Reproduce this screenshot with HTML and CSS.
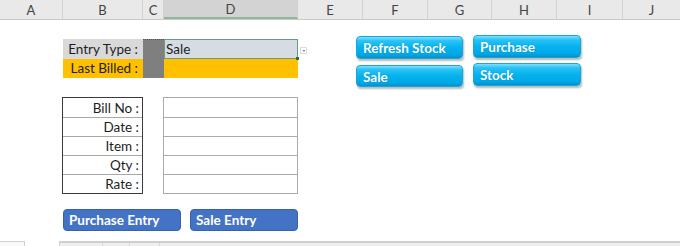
FILE: index.html
```html
<!DOCTYPE html>
<html>
<head>
<meta charset="utf-8">
<link rel="stylesheet" href="styles.css">
</head>
<body>
<div class="sheet">
  <div class="colhead">
    <div class="ch w-a">A</div>
    <div class="ch w-b">B</div>
    <div class="ch w-c">C</div>
    <div class="ch w-d sel">D</div>
    <div class="ch w-e">E</div>
    <div class="ch w-f">F</div>
    <div class="ch w-g">G</div>
    <div class="ch w-h">H</div>
    <div class="ch w-i">I</div>
    <div class="ch w-j">J</div>
  </div>
  <div class="grid">
    <div class="cell lbl gray r-entry">Entry Type :</div>
    <div class="cell dark"></div>
    <div class="cell val active r-entry">Sale<span class="handle"></span><span class="dd"><span class="arrow"></span></span></div>
    <div class="cell lbl yellow r-last">Last Billed :</div>
    <div class="cell yellowv r-last"></div>
    <div class="labels">
      <div class="trow">Bill No :</div>
      <div class="trow">Date :</div>
      <div class="trow">Item :</div>
      <div class="trow">Qty :</div>
      <div class="trow">Rate :</div>
    </div>
    <div class="inputs">
      <div class="irow"></div>
      <div class="irow"></div>
      <div class="irow"></div>
      <div class="irow"></div>
      <div class="irow"></div>
    </div>
  </div>
  <div class="footer">
    <div class="fbox"></div>
    <div class="tabs">
      <span class="tab t1"></span><span class="tab t2"></span><span class="tab t3"></span><span class="tab t4"></span>
    </div>
  </div>
  <button class="shine b-refresh">Refresh Stock</button>
  <button class="shine b-purchase">Purchase</button>
  <button class="shine b-sale">Sale</button>
  <button class="shine b-stock">Stock</button>
  <button class="flat b-pentry">Purchase Entry</button>
  <button class="flat b-sentry">Sale Entry</button>
</div>
</body>
</html>
```
FILE: styles.css
```css
html, body {
  margin: 0;
  padding: 0;
  background: #ffffff;
  overflow: hidden;
}
.sheet {
  position: relative;
  width: 680px;
  height: 246px;
  font-family: Lato, "Liberation Sans", sans-serif;
  color: #1e1e1e;
}
.colhead {
  display: flex;
  height: 20px;
  background: #e9e9e9;
  border-bottom: 1px solid #c9c9c9;
  box-sizing: border-box;
}
.ch {
  box-sizing: border-box;
  border-right: 1px solid #d2d2d2;
  display: flex;
  align-items: center;
  justify-content: center;
  font-size: 13px;
  color: #444;
  padding-top: 1px;
}
.ch.sel {
  background: #d3d3d3;
  border-bottom: 2px solid #8fb79a;
}
.w-a { width: 63px; }
.w-b { width: 80px; }
.w-c { width: 21px; }
.w-d { width: 134px; }
.w-e { width: 65px; }
.w-f { width: 65px; }
.w-g { width: 64px; }
.w-h { width: 65px; }
.w-i { width: 66px; }
.w-j { width: 57px; border-right: 0; }

.grid {
  display: grid;
  grid-template-columns: 63px 80px 21px 134px 65px 65px 64px 65px 66px 57px;
  grid-template-rows: repeat(11, 19.33px);
}
.cell {
  box-sizing: border-box;
  font-size: 13.5px;
  display: flex;
  align-items: center;
}
.r-entry { grid-row: 2; }
.r-last { grid-row: 3; }
.lbl {
  grid-column: 2;
  justify-content: flex-end;
  padding-right: 5px;
}
.gray { background: #d9d9d9; }
.yellow { background: #ffc000; }
.dark {
  grid-column: 3;
  grid-row: 2 / 4;
  background: #7f7f7f;
  border-top: 1px dotted #555;
}
.val {
  grid-column: 4;
  position: relative;
  background: #d6dce4;
  border: 1px solid #6f9a7c;
  padding-left: 1px;
}
.yellowv {
  grid-column: 4;
  background: #ffc000;
}
.handle {
  position: absolute;
  right: -2px;
  bottom: -2px;
  width: 3px;
  height: 3px;
  background: #217346;
}
.dd {
  position: absolute;
  right: -10px;
  top: 7px;
  width: 7px;
  height: 7px;
  box-sizing: border-box;
  border: 1px solid #dcdcdc;
  background: #fff;
  display: flex;
  align-items: center;
  justify-content: center;
}
.arrow {
  width: 0;
  height: 0;
  border-left: 1.5px solid transparent;
  border-right: 1.5px solid transparent;
  border-top: 2px solid #555;
}
.labels {
  grid-column: 2;
  grid-row: 5 / 10;
  display: grid;
  grid-template-rows: repeat(5, 1fr);
  border: 1px solid #3a3a3a;
  margin-left: -1px;
}
.trow {
  display: flex;
  align-items: center;
  justify-content: flex-end;
  padding-right: 3px;
  font-size: 13.5px;
  border-top: 1px solid #a8a8a8;
}
.trow:first-child { border-top: 0; }
.inputs {
  grid-column: 4;
  grid-row: 5 / 10;
  display: grid;
  grid-template-rows: repeat(5, 1fr);
  border: 1px solid #ababab;
  margin-left: -1px;
}
.irow { border-top: 1px solid #ababab; }
.irow:first-child { border-top: 0; }

.footer {
  margin-top: 8.4px;
  height: 5px;
  display: flex;
}
.fbox {
  width: 24px;
  border-top: 1px solid #cfcfcf;
  border-right: 1px solid #cfcfcf;
  background: #fafafa;
}
.tabs {
  margin-left: 34px;
  flex: 1;
  border-top: 2px solid #cfcfcf;
  border-left: 1px solid #cfcfcf;
  background: #efefef;
  display: flex;
}
.tab { border-right: 1px solid #d8d8d8; height: 3px; }
.t1 { width: 42px; }
.t2 { width: 26px; }
.t3 { width: 29px; }
.t4 { width: 22px; border-right: 0; }

button {
  font-family: Lato, "Liberation Sans", sans-serif;
  font-weight: 700;
  font-size: 13.5px;
  color: #fff;
  text-align: left;
  margin: 0;
  cursor: default;
}
.shine {
  position: absolute;
  width: 107px;
  height: 23px;
  padding: 0 0 0 6px;
  border: 1px solid #1aa6d8;
  border-radius: 4px;
  background: linear-gradient(to bottom, #7fe0ff 0%, #29c3f5 18%, #05b2ee 50%, #00a7e6 85%, #0a8fc4 100%);
  box-shadow: 1px 2px 2px rgba(0, 0, 0, 0.28);
  text-shadow: 0 0 1px rgba(0, 80, 120, 0.4);
}
.b-refresh { left: 356px; top: 36px; }
.b-purchase { left: 473px; top: 35px; width: 108px; }
.b-sale { left: 356px; top: 65px; height: 22px; padding-top: 2px; }
.b-stock { left: 473px; top: 63px; width: 108px; }
.flat {
  position: absolute;
  top: 209px;
  height: 22px;
  padding: 0 0 0 5px;
  background: #4472c4;
  border: 1px solid #3561ad;
  border-radius: 4px;
}
.b-pentry { left: 63px; width: 118px; }
.b-sentry { left: 190px; width: 108px; }
```
